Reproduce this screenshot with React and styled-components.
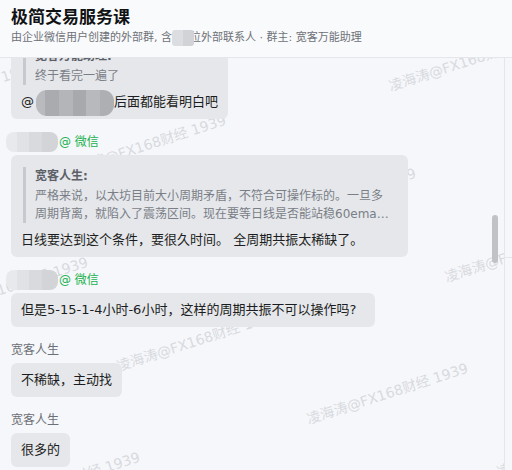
import React from "react";
import styled, { createGlobalStyle } from "styled-components";

const GlobalStyle = createGlobalStyle`
  html, body { margin: 0; padding: 0; }
  body {
    font-family: "DejaVu Sans", "Noto Sans CJK SC", sans-serif;
    background: #f6f7fa;
    color: #1f2023;
  }
  * { box-sizing: border-box; }
`;

const Page = styled.div`
  width: 100vw;
  height: 100vh;
  display: flex;
  flex-direction: column;
  overflow: hidden;
`;

const Header = styled.header`
  flex-shrink: 0;
  height: 58px;
  padding: 6px 11px 0;
  background: #f9fafb;
  border-bottom: 1px solid #e4e6ea;
  position: relative;
  z-index: 2;
`;

const Title = styled.h1`
  margin: 0;
  font-size: 17px;
  line-height: 22px;
  font-weight: 700;
  color: #111214;
`;

const Subtitle = styled.div`
  margin-top: 2px;
  font-size: 11px;
  line-height: 16px;
  color: #6e7178;
  white-space: nowrap;
`;

const Body = styled.div`
  flex: 1;
  min-height: 0;
  display: flex;
`;

const ChatPane = styled.main`
  flex: 1;
  position: relative;
  overflow: hidden;
  display: flex;
  flex-direction: column;
  justify-content: flex-end;
  border-right: 1px solid #e4e6ea;
`;

const SideStrip = styled.aside`
  width: 7px;
  flex-shrink: 0;
`;

const SideTop = styled.div`
  height: 200px;
  border-bottom: 1px solid #e4e6ea;
`;

const WatermarkLayer = styled.div`
  position: absolute;
  inset: 0;
  pointer-events: none;
  z-index: 0;
`;

const Watermark = styled.span`
  position: absolute;
  white-space: nowrap;
  font-size: 14px;
  line-height: 17px;
  color: #d8dadf;
  transform-origin: 0 100%;
  transform: rotate(-18deg);
`;

const MessageList = styled.div`
  flex-shrink: 0;
  position: relative;
  z-index: 1;
  display: flex;
  flex-direction: column;
  align-items: flex-start;
  gap: 15px;
  padding: 0 11px 3px;
`;

const Group = styled.div`
  display: flex;
  flex-direction: column;
  align-items: flex-start;
  gap: 5px;
  max-width: 100%;
`;

const SenderRow = styled.div`
  display: flex;
  align-items: center;
  font-size: 12px;
  line-height: 16px;
  height: 16px;
`;

const SenderName = styled.div`
  font-size: 12px;
  line-height: 16px;
  height: 16px;
  color: #6b6f76;
`;

const Source = styled.span`
  color: #22b24f;
`;

const Pixelated = styled.span`
  display: inline-block;
  vertical-align: middle;
  width: ${(p) => p.$w}px;
  height: ${(p) => p.$h}px;
  margin: ${(p) => p.$m || "0"};
  border-radius: ${(p) => p.$r || 8}px;
  background: ${(p) =>
    p.$dark
      ? "linear-gradient(90deg, #b9babe 0 12%, #a9abaf 12% 30%, #b3b5b8 30% 48%, #a7a9ad 48% 64%, #b8b9bd 64% 82%, #adafb3 82%)"
      : p.$mid
      ? "linear-gradient(90deg, #dcdde0 0 50%, #d2d3d6 50%)"
      : "linear-gradient(90deg, #e8e9ec 0 22%, #e1e2e5 22% 45%, #d9dadd 45% 70%, #d3d4d8 70%)"};
  filter: blur(0.6px);
`;

const Bubble = styled.div`
  background: #e5e7eb;
  border-radius: 6px;
  padding: 7px 10px;
  max-width: 397px;
  font-size: 13px;
  line-height: 20px;
  color: #1c1d20;
`;

const Quote = styled.div`
  margin: 5px 0 7px 2px;
  padding: 0 6px 0 9px;
  border-left: 3px solid #c7c9ce;
`;

const QuoteName = styled.div`
  font-size: 12px;
  line-height: 18px;
  font-weight: 700;
  color: #5c6067;
`;

const QuoteText = styled.div`
  margin-top: 2px;
  font-size: 12px;
  line-height: 18px;
  color: #7a7e86;
  display: -webkit-box;
  -webkit-box-orient: vertical;
  -webkit-line-clamp: 2;
  overflow: hidden;
`;

const ScrollThumb = styled.div`
  position: absolute;
  right: 6px;
  top: 157px;
  width: 6px;
  height: 48px;
  border-radius: 3px;
  background: #c1c2c6;
  z-index: 3;
`;

const PANE_TOP = 58;
const markStarts = [
  [16, -15], [206, 38], [392, 95],
  [-122, 127], [68, 180], [258, 233], [448, 286],
  [-70, 322], [120, 375], [310, 428], [500, 481],
  [-18, 517],
];

const WechatSender = () => (
  <SenderRow>
    <Pixelated $w={52} $h={20} $m="0 1px 0 -5px" />
    <Source>@ 微信</Source>
  </SenderRow>
);

export default function App() {
  return (
    <>
      <GlobalStyle />
      <Page>
        <Header>
          <Title>极简交易服务课</Title>
          <Subtitle>
            由企业微信用户创建的外部群, 含
            <Pixelated $mid $w={22} $h={16} $r={3} $m="-2px -4px -2px 0" />
            位外部联系人 · 群主: 宽客万能助理
          </Subtitle>
        </Header>
        <Body>
          <ChatPane>
            <WatermarkLayer>
              {markStarts.map(([x, y], i) => (
                <Watermark
                  key={i}
                  style={{ left: x, top: y - PANE_TOP - 17 }}
                >
                  凌海涛@FX168财经 1939
                </Watermark>
              ))}
            </WatermarkLayer>
            <MessageList>
              <Group>
                <SenderName>宽客人生</SenderName>
                <Bubble>
                  <Quote>
                    <QuoteName>宽客万能助理:</QuoteName>
                    <QuoteText>终于看完一遍了</QuoteText>
                  </Quote>
                  @
                  <Pixelated $dark $w={78} $h={26} $r={11} $m="-4px 0 -4px 2px" />
                  后面都能看明白吧
                </Bubble>
              </Group>
              <Group>
                <WechatSender />
                <Bubble>
                  <Quote>
                    <QuoteName>宽客人生:</QuoteName>
                    <QuoteText>
                      严格来说，以太坊目前大小周期矛盾，不符合可操作标的。一旦多周期背离，就陷入了震荡区间。现在要等日线是否能站稳60ema，再看4小时和1小时的结构是否重新共振。
                    </QuoteText>
                  </Quote>
                  日线要达到这个条件，要很久时间。 全周期共振太稀缺了。
                </Bubble>
              </Group>
              <Group>
                <WechatSender />
                <Bubble>但是5-15-1-4小时-6小时，这样的周期共振不可以操作吗?&nbsp;&nbsp;</Bubble>
              </Group>
              <Group>
                <SenderName>宽客人生</SenderName>
                <Bubble>不稀缺，主动找</Bubble>
              </Group>
              <Group>
                <SenderName>宽客人生</SenderName>
                <Bubble>很多的</Bubble>
              </Group>
            </MessageList>
            <ScrollThumb />
          </ChatPane>
          <SideStrip>
            <SideTop />
          </SideStrip>
        </Body>
      </Page>
    </>
  );
}
